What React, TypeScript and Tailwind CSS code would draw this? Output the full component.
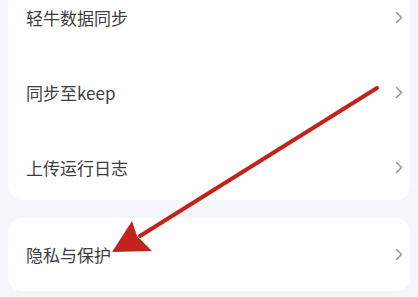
const font = { fontFamily: '"Noto Sans CJK SC", "Noto Sans", sans-serif' }

function Chevron() {
  return (
    <svg width="8" height="13" viewBox="0 0 8 13" fill="none" className="shrink-0">
      <path d="M1.5 1.5 L6.5 6.5 L1.5 11.5" stroke="#9b9b9b" strokeWidth="1.6" strokeLinecap="round" strokeLinejoin="round" />
    </svg>
  )
}

function Row({ label, h = 'h-[66px]' }: { label: string; h?: string }) {
  return (
    <div className={`flex items-center justify-between pl-[18px] pr-[7px] ${h}`}>
      <span className="text-[17px] leading-none text-[#3d3d3d]">{label}</span>
      <Chevron />
    </div>
  )
}

export default function App() {
  return (
    <div className="relative w-[418px] h-[297px] overflow-hidden bg-[#f5f6f9]" style={font}>
      <div className="-mt-[16px] flex flex-col gap-[18px] pl-[8px] pr-[8px]">
        <div className="bg-white rounded-[14px] flex flex-col gap-[9px]">
          <Row label="轻牛数据同步" />
          <Row label="同步至keep" />
          <Row label="上传运行日志" />
        </div>
        <div className="bg-white rounded-[14px] flex flex-col">
          <Row label="隐私与保护" h="h-[73px]" />
        </div>
      </div>

      {/* annotation arrow */}
      <svg className="absolute inset-0 pointer-events-none" width="418" height="297" viewBox="0 0 418 297">
        <line x1="377" y1="88" x2="140" y2="236" stroke="#c3231d" strokeWidth="4" strokeLinecap="round" />
        <path d="M112 252 L132 221 L137 236 L152 251 Z" fill="#c3231d" />
      </svg>
    </div>
  )
}
